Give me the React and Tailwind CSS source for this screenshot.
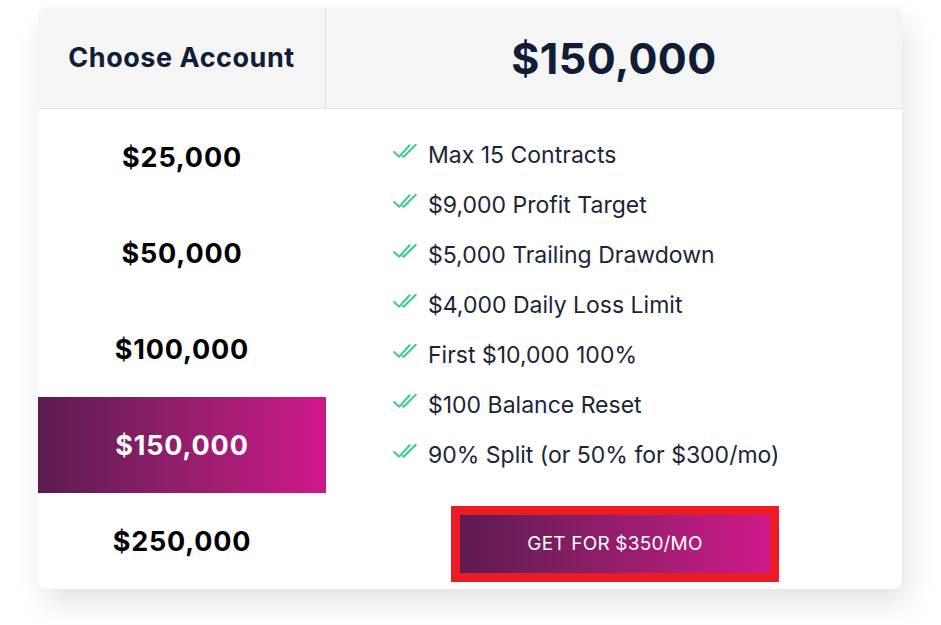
const accounts = ['$25,000', '$50,000', '$100,000', '$150,000', '$250,000']

const features = [
  'Max 15 Contracts',
  '$9,000 Profit Target',
  '$5,000 Trailing Drawdown',
  '$4,000 Daily Loss Limit',
  'First $10,000 100%',
  '$100 Balance Reset',
  '90% Split (or 50% for $300/mo)',
]

function DoubleCheck() {
  return (
    <svg width="31" height="19" viewBox="0 0 30 18" fill="none" className="shrink-0">
      <path d="M2 9.5l5 4.5L17 3" stroke="#3fcb8c" strokeWidth="2" strokeLinecap="round" strokeLinejoin="round" />
      <path d="M10.5 13.5l0.8 0.6L23 2.5" stroke="#3fcb8c" strokeWidth="2" strokeLinecap="round" strokeLinejoin="round" />
    </svg>
  )
}

export default function App() {
  const selected = 3
  return (
    <div className="min-h-screen bg-white pt-2 pl-[38px]" style={{ fontFamily: 'Inter, "Noto Sans", sans-serif' }}>
      <div className="w-[864px] overflow-hidden rounded-lg bg-white shadow-[6px_14px_28px_rgba(0,0,0,0.11)]">
        <div className="flex h-[101px] border-b border-[#e4e4e6] bg-[#f5f5f6]">
          <div className="flex w-[288px] items-center justify-center border-r border-[#e2e2e4] text-[27px] font-bold tracking-[0.02em] text-[#0f1d36]">
            Choose Account
          </div>
          <div className="flex flex-1 items-center justify-center text-[43px] font-bold tracking-[0.01em] text-[#0f1d36]">
            $150,000
          </div>
        </div>
        <div className="flex">
          <div className="w-[288px]">
            {accounts.map((a, i) => (
              <div
                key={a}
                className={
                  i === selected
                    ? 'flex h-[96px] items-center justify-center bg-gradient-to-r from-[#5c1b4e] to-[#cf178a] pt-[3px] text-[27px] font-bold tracking-[0.03em] text-white'
                    : 'flex h-[96px] items-center justify-center pt-[3px] text-[27px] font-bold tracking-[0.03em] text-black'
                }
              >
                {a}
              </div>
            ))}
          </div>
          <div className="flex flex-1 flex-col pl-[66px] pt-[31px]">
            <ul className="flex flex-col gap-[20px]">
              {features.map((f) => (
                <li key={f} className="flex h-[30px] items-center gap-[5px] text-[23px] text-[#1c2438]">
                  <span className="-mt-2">
                    <DoubleCheck />
                  </span>
                  {f}
                </li>
              ))}
            </ul>
            <div className="mt-[36px] ml-[59px] w-[328px] border-[9px] border-[#ec1c24]">
              <button className="flex h-[58px] w-full items-center justify-center bg-gradient-to-r from-[#5c1b4e] to-[#cf178a] text-[19px] font-normal tracking-[0.01em] text-white">
                GET FOR $350/MO
              </button>
            </div>
          </div>
        </div>
      </div>
    </div>
  )
}
